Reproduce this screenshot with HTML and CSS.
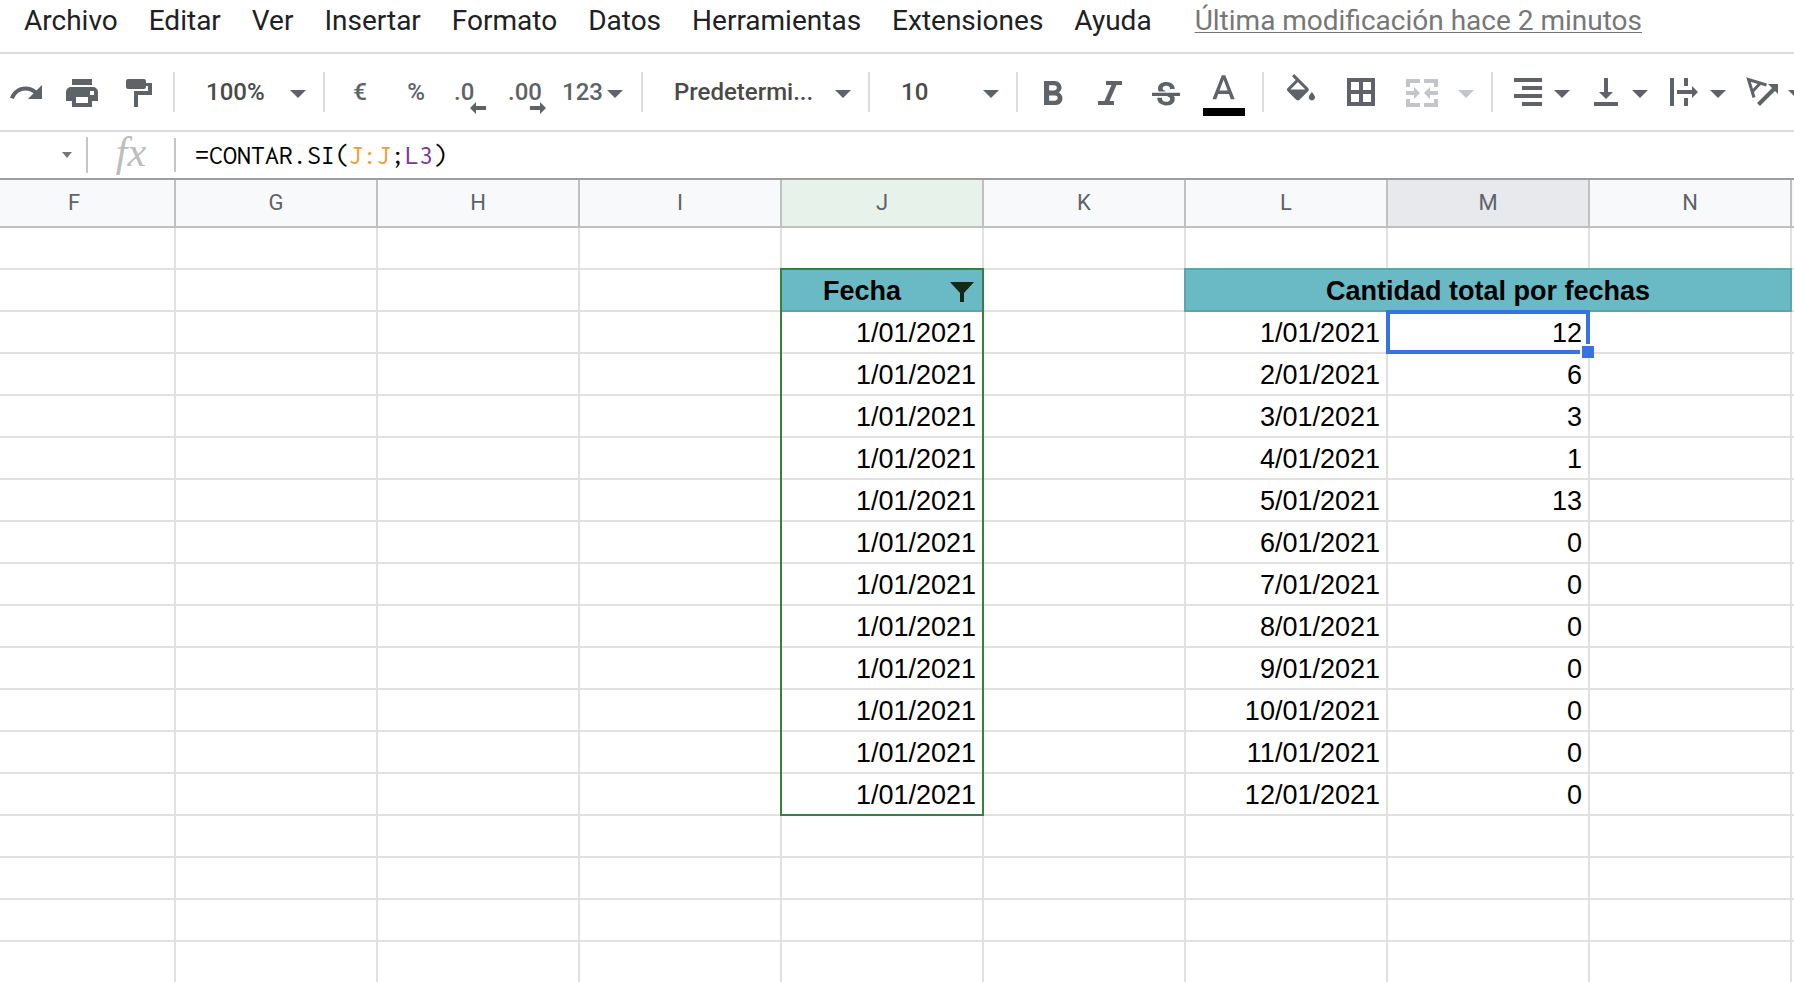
FILE: index.html
```html
<!DOCTYPE html>
<html lang="es">
<head>
<meta charset="utf-8">
<title>Hoja de cálculo</title>
<link rel="stylesheet" href="styles.css">
</head>
<body>
<nav class="menu" aria-label="Menú">
  <button>Archivo</button>
  <button>Editar</button>
  <button>Ver</button>
  <button>Insertar</button>
  <button>Formato</button>
  <button>Datos</button>
  <button>Herramientas</button>
  <button>Extensiones</button>
  <button>Ayuda</button>
  <a class="last-edit" href="#">Última modificación hace 2 minutos</a>
</nav>

<div class="toolbar" role="toolbar" aria-label="Herramientas">
  <div class="group">
    <button class="tool" aria-label="Rehacer"><svg class="icon" viewBox="0 0 36 36"><path transform="translate(-0.4 0) scale(1.564)" d="M18.4 10.6C16.55 8.99 14.15 8 11.5 8c-4.65 0-8.58 3.03-9.96 7.22L3.9 16a8 8 0 0 1 7.6-5.5c1.95 0 3.73.72 5.12 1.88L13 16h9V7l-3.6 3.6z"/></svg></button>
    <button class="tool" aria-label="Imprimir"><svg class="icon" viewBox="0 0 36 36"><path fill-rule="evenodd" d="M8 5h20v6H8zM7 13h22a5 5 0 0 1 5 5v9h-6v6H8v-6H2v-9a5 5 0 0 1 5-5zM12 23v6h12v-6zM26 17v4h4v-4z"/></svg></button>
    <button class="tool" aria-label="Copiar formato"><svg class="icon" viewBox="0 0 36 36"><path d="M8 5h16a2 2 0 0 1 2 2v2h6v12H18v12h-4V17h14v-5h-2v1a2 2 0 0 1-2 2H8a2 2 0 0 1-2-2V7a2 2 0 0 1 2-2z"/></svg></button>
  </div>
  <span class="divider"></span>
  <div class="pick zoom-pick">
    <select aria-label="Zoom"><option>100%</option></select>
    <svg class="caret" viewBox="0 0 16 8"><path d="M0 0h16L8 8z"/></svg>
  </div>
  <span class="divider"></span>
  <div class="group">
    <button class="tool">€</button>
    <button class="tool">%</button>
    <button class="tool" aria-label="Reducir decimales"><svg class="icon" viewBox="0 0 36 36"><text class="digits" x="0" y="26">.0</text><path d="M16 34l6-6v4h10v4H22v4z"/></svg></button>
    <button class="tool" aria-label="Aumentar decimales"><svg class="icon" viewBox="0 0 36 36"><text class="digits" x="-2" y="26">.00</text><path d="M36 34l-6-6v4H20v4h10v4z"/></svg></button>
  </div>
  <button class="tool formats">123<svg class="caret" viewBox="0 0 16 8"><path d="M0 0h16L8 8z"/></svg></button>
  <span class="divider"></span>
  <div class="pick font-pick">
    <select aria-label="Fuente"><option>Predetermi...</option></select>
    <svg class="caret" viewBox="0 0 16 8"><path d="M0 0h16L8 8z"/></svg>
  </div>
  <span class="divider"></span>
  <div class="pick size-pick">
    <select aria-label="Tamaño de fuente"><option>10</option></select>
    <svg class="caret" viewBox="0 0 16 8"><path d="M0 0h16L8 8z"/></svg>
  </div>
  <span class="divider"></span>
  <div class="group">
    <button class="tool" aria-label="Negrita"><svg class="icon" viewBox="0 0 36 36"><path transform="translate(-3 .1) scale(1.714)" d="M15.6 10.79c.97-.67 1.65-1.77 1.65-2.79 0-2.26-1.75-4-4-4H7v14h7.04c2.09 0 3.71-1.7 3.71-3.79 0-1.52-.86-2.82-2.15-3.42zM10 6.5h3c.83 0 1.5.67 1.5 1.5s-.67 1.5-1.5 1.5h-3v-3zm3.5 9H10v-3h3.5c.83 0 1.5.67 1.5 1.5s-.67 1.5-1.5 1.5z"/></svg></button>
    <button class="tool" aria-label="Cursiva"><svg class="icon" viewBox="0 0 36 36"><path d="M15 7h16v4h-5.500l-7 16H23v4H7v-4h6.500l7-16H15z"/></svg></button>
    <button class="tool" aria-label="Tachado"><svg class="icon" viewBox="0 0 36 36"><path transform="translate(.33 3.400) scale(1.556)" d="M7.240 8.750c-.26-.48-.39-1.030-.39-1.670 0-.61.13-1.160.4-1.670.26-.5.63-.93 1.110-1.290.48-.35 1.050-.63 1.700-.83.66-.19 1.390-.29 2.180-.29.81 0 1.540.11 2.210.34.66.22 1.230.54 1.690.94.47.4.83.88 1.080 1.430s.38 1.150.38 1.810h-3.010c0-.31-.05-.59-.15-.85-.09-.27-.24-.49-.44-.68-.2-.19-.45-.33-.75-.44-.3-.1-.66-.16-1.060-.16-.39 0-.74.04-1.030.13s-.53.21-.72.36c-.19.16-.34.34-.44.55-.1.21-.15.43-.15.66 0 .48.25.88.74 1.210.38.25.77.48 1.410.7H7.390c-.05-.08-.11-.17-.15-.25zM21 12v-2.200H3v2.200h9.620c.18.07.4.14.55.2.37.17.66.34.87.51s.35.36.43.57c.07.2.11.43.11.69 0 .23-.05.45-.14.66-.09.2-.23.38-.42.53-.19.15-.42.26-.71.35-.29.08-.63.13-1.010.13-.43 0-.83-.04-1.180-.13s-.66-.23-.91-.42c-.25-.19-.45-.44-.59-.75s-.25-.76-.25-1.210H6.400c0 .55.08 1.130.24 1.580s.37.85.65 1.210c.28.35.6.66.98.92.37.26.78.48 1.220.65.44.17.9.3 1.380.39.48.08.96.13 1.440.13.8 0 1.530-.09 2.180-.28s1.210-.45 1.670-.79c.46-.34.82-.77 1.070-1.270s.38-1.070.38-1.710c0-.6-.1-1.140-.31-1.610-.05-.11-.11-.23-.17-.33H21z"/></svg></button>
    <button class="tool text-color" aria-label="Color del texto"><svg class="icon wide" viewBox="0 0 42 36"><path transform="translate(0 -4) scale(1.714)" d="M11 3L5.500 17h2.250l1.120-3h6.250l1.120 3h2.250L13 3h-2zm-1.380 9L12 5.670 14.380 12H9.620z"/><path class="swatch" d="M0 34h42v8H0z"/></svg></button>
  </div>
  <span class="divider"></span>
  <div class="group roomy">
    <button class="tool" aria-label="Color de relleno"><svg class="icon" viewBox="0 0 36 36"><path transform="translate(1.330 0) scale(1.556)" d="M16.560 8.940L7.620 0 6.210 1.410l2.380 2.380-5.150 5.150c-.59.59-.59 1.540 0 2.120l5.500 5.500c.29.29.68.44 1.060.44s.77-.15 1.060-.44l5.500-5.500c.59-.58.59-1.530 0-2.120zM5.210 10L10 5.210 14.790 10H5.210zM19 11.500s-2 2.170-2 3.500c0 1.100.9 2 2 2s2-.9 2-2c0-1.330-2-3.500-2-3.500z"/></svg></button>
    <button class="tool" aria-label="Bordes"><svg class="icon" viewBox="0 0 36 36"><path fill-rule="evenodd" d="M6 4h28v28H6zM10 8v8h8V8zM22 8v8h8V8zM10 20v8h8v-8zM22 20v8h8v-8z"/></svg></button>
    <button class="tool merge" aria-label="Combinar celdas" disabled><svg class="icon" viewBox="0 0 36 36"><path d="M5 5h14v4H9v4H5zM37 5H23v4h10v4h4zM5 33h14v-4H9v-4H5zM37 33H23v-4h10v-4h4zM5 17h8v-4l6 6-6 6v-4H5zM37 17h-8v-4l-6 6 6 6v-4h8z"/></svg><svg class="caret" viewBox="0 0 16 8"><path d="M0 0h16L8 8z"/></svg></button>
  </div>
  <span class="divider"></span>
  <div class="group menus">
    <button class="tool" aria-label="Alineación horizontal"><svg class="icon" viewBox="0 0 36 36"><path d="M4 4h28v4H4zM12 12h20v4H12zM4 20h28v4H4zM12 28h20v4H12z"/></svg><svg class="caret" viewBox="0 0 16 8"><path d="M0 0h16L8 8z"/></svg></button>
    <button class="tool" aria-label="Alineación vertical"><svg class="icon" viewBox="0 0 36 36"><path d="M6 28h24v4H6zM16 4h4v14h5l-7 7-7-7h5z"/></svg><svg class="caret" viewBox="0 0 16 8"><path d="M0 0h16L8 8z"/></svg></button>
    <button class="tool" aria-label="Ajuste de texto"><svg class="icon" viewBox="0 0 36 36"><path d="M4 4h4v28H4zM18 4h4v8h-4zM18 24h4v8h-4zM11 16h15v-4l6 6-6 6v-4H11z"/></svg><svg class="caret" viewBox="0 0 16 8"><path d="M0 0h16L8 8z"/></svg></button>
    <button class="tool" aria-label="Rotación de texto"><svg class="icon" viewBox="0 0 36 36"><path class="stroke thin" d="M10 23.500L4.500 5.500 22.500 11M8.500 17.500L16 9.500"/><path class="stroke" d="M14.500 30.500L30 15"/><path d="M24 10h10v10z"/></svg><svg class="caret" viewBox="0 0 16 8"><path d="M0 0h16L8 8z"/></svg></button>
  </div>
</div>

<div class="formula-bar">
  <button class="name-box" aria-label="Cuadro de nombres"><svg viewBox="0 0 10 6"><path d="M0 0h10L5 6z"/></svg></button>
  <span class="fx">fx</span>
  <div class="formula" role="textbox" aria-label="Fórmula" contenteditable="true" spellcheck="false">=CONTAR.SI(<span class="ref-a">J:J</span>;<span class="ref-b">L3</span>)</div>
</div>

<main class="sheet">
<table>
<colgroup><col span="10"></colgroup>
<thead>
<tr><th>F</th><th>G</th><th>H</th><th>I</th><th class="in-range">J</th><th>K</th><th>L</th><th class="current">M</th><th>N</th><th></th></tr>
</thead>
<tbody>
<tr><td></td><td></td><td></td><td></td><td></td><td></td><td></td><td></td><td></td><td></td></tr>
<tr><td></td><td></td><td></td><td></td><td class="range head">Fecha<button class="filter" aria-label="Filtro"><svg viewBox="0 0 24 20"><path d="M0 0h24L14 11v9h-4v-9z"/></svg></button></td><td></td><td class="title" colspan="3">Cantidad total por fechas</td><td></td></tr>
<tr><td></td><td></td><td></td><td></td><td class="range">1/01/2021</td><td></td><td>1/01/2021</td><td class="active">12<span class="handle"></span></td><td></td><td></td></tr>
<tr><td></td><td></td><td></td><td></td><td class="range">1/01/2021</td><td></td><td>2/01/2021</td><td>6</td><td></td><td></td></tr>
<tr><td></td><td></td><td></td><td></td><td class="range">1/01/2021</td><td></td><td>3/01/2021</td><td>3</td><td></td><td></td></tr>
<tr><td></td><td></td><td></td><td></td><td class="range">1/01/2021</td><td></td><td>4/01/2021</td><td>1</td><td></td><td></td></tr>
<tr><td></td><td></td><td></td><td></td><td class="range">1/01/2021</td><td></td><td>5/01/2021</td><td>13</td><td></td><td></td></tr>
<tr><td></td><td></td><td></td><td></td><td class="range">1/01/2021</td><td></td><td>6/01/2021</td><td>0</td><td></td><td></td></tr>
<tr><td></td><td></td><td></td><td></td><td class="range">1/01/2021</td><td></td><td>7/01/2021</td><td>0</td><td></td><td></td></tr>
<tr><td></td><td></td><td></td><td></td><td class="range">1/01/2021</td><td></td><td>8/01/2021</td><td>0</td><td></td><td></td></tr>
<tr><td></td><td></td><td></td><td></td><td class="range">1/01/2021</td><td></td><td>9/01/2021</td><td>0</td><td></td><td></td></tr>
<tr><td></td><td></td><td></td><td></td><td class="range">1/01/2021</td><td></td><td>10/01/2021</td><td>0</td><td></td><td></td></tr>
<tr><td></td><td></td><td></td><td></td><td class="range">1/01/2021</td><td></td><td>11/01/2021</td><td>0</td><td></td><td></td></tr>
<tr><td></td><td></td><td></td><td></td><td class="range last">1/01/2021</td><td></td><td>12/01/2021</td><td>0</td><td></td><td></td></tr>
<tr><td></td><td></td><td></td><td></td><td></td><td></td><td></td><td></td><td></td><td></td></tr>
<tr><td></td><td></td><td></td><td></td><td></td><td></td><td></td><td></td><td></td><td></td></tr>
<tr><td></td><td></td><td></td><td></td><td></td><td></td><td></td><td></td><td></td><td></td></tr>
<tr><td></td><td></td><td></td><td></td><td></td><td></td><td></td><td></td><td></td><td></td></tr>
</tbody>
</table>
</main>
</body>
</html>
```

FILE: styles.css
```css
* {
  box-sizing: border-box;
}

body {
  margin: 0;
  height: 100vh;
  display: flex;
  flex-direction: column;
  overflow: hidden;
  background: #fff;
  color: #202124;
  font-family: Roboto, sans-serif;
}

button,
select {
  margin: 0;
  padding: 0;
  border: 0;
  background: none;
  color: inherit;
  font: inherit;
}

svg {
  display: block;
  overflow: visible;
  fill: currentColor;
}

/* Menu */
.menu {
  display: flex;
  flex: none;
  gap: 31px;
  padding: 1px 24px 11px;
  border-bottom: 2px solid #dadce0;
  font-size: 28px;
  line-height: 40px;
  white-space: nowrap;
}

.last-edit {
  margin-left: 12px;
  color: #777;
  text-decoration-thickness: 1px;
  text-underline-offset: 2px;
}

/* Toolbar */
.toolbar {
  display: flex;
  flex: none;
  align-items: center;
  height: 78px;
  padding-left: 8px;
  border-bottom: 2px solid #dadce0;
  color: #5f6368;
  font-size: 24px;
  font-weight: 500;
  line-height: 36px;
}

.toolbar > * {
  flex: none;
}

.group {
  display: flex;
  gap: 20px;
}

.group.roomy {
  gap: 24px;
}

.group.menus {
  gap: 18px;
}

.divider {
  width: 2px;
  height: 40px;
  margin: 0 17px;
  background: #dadce0;
}

.tool {
  display: flex;
  align-items: center;
  justify-content: center;
  min-width: 36px;
  height: 36px;
  color: #5f6368;
}

.icon {
  flex: none;
  width: 36px;
  height: 36px;
}

.icon.wide {
  width: 42px;
}

.digits {
  font-size: 24px;
  font-weight: 500;
}

.swatch {
  fill: #000;
}

.stroke {
  fill: none;
  stroke: currentColor;
  stroke-width: 4;
}

.stroke.thin {
  stroke-width: 3;
}

.caret {
  flex: none;
  width: 16px;
  height: 8px;
  margin-top: 4px;
}

.menus .tool {
  gap: 8px;
}

.tool.merge {
  gap: 21px;
  color: #c3c5c8;
}

.formats {
  justify-content: flex-start;
  gap: 4px;
  width: 62px;
  margin-left: 16px;
}

.pick {
  display: grid;
  align-items: center;
  margin-left: 14px;
}

.pick > * {
  grid-area: 1 / 1;
}

.pick select {
  width: 100%;
  height: 36px;
  appearance: none;
  color: #4a4a4a;
}

.pick .caret {
  justify-self: end;
  pointer-events: none;
}

.zoom-pick {
  width: 100px;
}

.font-pick {
  width: 177px;
}

.size-pick {
  width: 98px;
}

/* Formula bar */
.formula-bar {
  display: flex;
  flex: none;
  align-items: center;
  height: 48px;
  border-bottom: 2px solid #9e9e9e;
}

.name-box {
  display: flex;
  align-items: center;
  justify-content: flex-end;
  width: 88px;
  height: 36px;
  padding-right: 14px;
  border-right: 2px solid #c6c6c6;
  color: #777;
}

.name-box svg {
  width: 10px;
  height: 6px;
}

.fx {
  width: 88px;
  padding-bottom: 6px;
  border-right: 2px solid #c6c6c6;
  color: #bdbdbd;
  font-family: "Liberation Serif", serif;
  font-size: 42px;
  font-style: italic;
  line-height: 28px;
  text-align: center;
}

.formula {
  flex: 1;
  padding-left: 19px;
  color: #000;
  font-family: Inconsolata, "DejaVu Sans Mono", monospace;
  font-size: 28px;
  line-height: 36px;
}

.ref-a {
  color: #f19d38;
}

.ref-b {
  color: #7b3794;
}

/* Sheet */
.sheet {
  flex: 1;
  min-height: 0;
  overflow: hidden;
}

table {
  width: 2020px;
  margin-left: -26px;
  border-collapse: separate;
  border-spacing: 0;
  table-layout: fixed;
}

col {
  width: 202px;
}

th {
  height: 48px;
  padding: 0 0 1px;
  border: solid #c0c0c0;
  border-width: 0 2px 2px 0;
  background: #f8f9fa;
  color: #5f6368;
  font-size: 22px;
  font-weight: 400;
}

th.in-range {
  background: #e7f3ea;
}

th.current {
  background: #e8e9ec;
}

td {
  position: relative;
  height: 42px;
  padding: 2px 6px 0 0;
  border: solid #e1e1e1;
  border-width: 0 2px 2px 0;
  color: #000;
  font-family: "Liberation Sans", Arial, sans-serif;
  font-size: 27px;
  line-height: 38px;
  text-align: right;
  white-space: nowrap;
}

.head,
.title {
  background: #69bac4;
  font-weight: 700;
  text-align: center;
}

.head {
  padding-right: 40px;
  border-bottom-color: #5ca5ae;
}

.title {
  padding-right: 0;
}

/* Outlines that cover the grid lines around a cell */
.range::before,
.title::before,
.active::before {
  content: "";
  position: absolute;
  inset: -2px;
  pointer-events: none;
}

.range::before {
  border: solid #37803f;
  border-width: 0 2px;
}

.range.head::before {
  border-top-width: 2px;
}

.range.last::before {
  border-bottom-width: 2px;
}

.title::before {
  border: 2px solid #5ca5ae;
}

.active::before {
  border: 4px solid #3871e0;
}

.filter {
  position: absolute;
  top: 12px;
  right: 8px;
  width: 24px;
  height: 20px;
  color: #142814;
}

.handle {
  position: absolute;
  right: -6px;
  bottom: -6px;
  z-index: 1;
  width: 12px;
  height: 12px;
  background: #3871e0;
  box-shadow: -2px -2px #fff;
}
```
